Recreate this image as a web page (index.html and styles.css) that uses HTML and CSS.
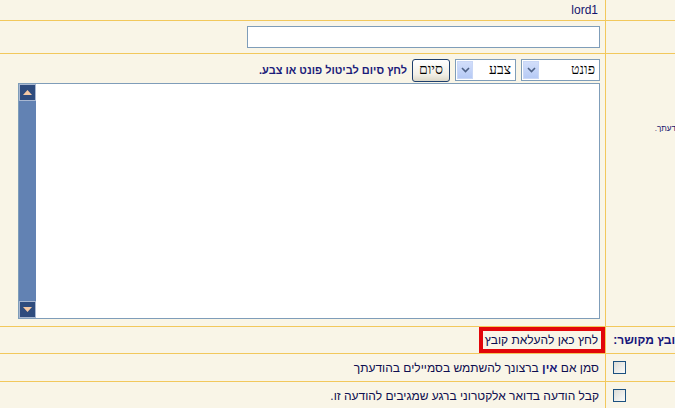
FILE: index.html
```html
<!DOCTYPE html>
<html>
<head>
<meta charset="UTF-8">
<title>תגובה חדשה</title>
<link rel="stylesheet" href="styles.css">
</head>
<body>
<div class="form">

  <div class="cell main user" dir="rtl">lord1</div>
  <div class="cell side"></div>

  <div class="cell main subject" dir="rtl"><input type="text" class="field"></div>
  <div class="cell side"></div>

  <div class="cell main message" dir="rtl">
    <div class="toolbar">
      <div class="pick font-pick">
        <span class="pick-label">פונט</span>
        <span class="pick-btn"><svg width="9" height="6" viewBox="0 0 9 6"><polyline points="1,1 4.5,4.5 8,1" fill="none" stroke="#4d6185" stroke-width="1.6"/></svg></span>
      </div>
      <div class="pick color-pick">
        <span class="pick-label">צבע</span>
        <span class="pick-btn"><svg width="9" height="6" viewBox="0 0 9 6"><polyline points="1,1 4.5,4.5 8,1" fill="none" stroke="#4d6185" stroke-width="1.6"/></svg></span>
      </div>
      <button class="done">סיום</button>
      <span class="hint">לחץ סיום לביטול פונט או צבע.</span>
    </div>
    <div class="editor">
      <textarea class="body"></textarea>
      <div class="scroll">
        <span class="sbtn"><svg width="9" height="5" viewBox="0 0 9 5"><polygon points="0,5 4.5,0 9,5" fill="#f6c9a4"/></svg></span>
        <span class="track"></span>
        <span class="sbtn"><svg width="9" height="5" viewBox="0 0 9 5"><polygon points="0,0 4.5,5 9,0" fill="#f6c9a4"/></svg></span>
      </div>
    </div>
  </div>
  <div class="cell side label small-label" dir="rtl">הודעתך.</div>

  <div class="cell main attach" dir="rtl"><span class="upload">לחץ כאן להעלאת קובץ</span></div>
  <div class="cell side label" dir="rtl"><b>קובץ מקושר:</b></div>

  <div class="cell main option" dir="rtl"><span>סמן אם <b>אין</b> ברצונך להשתמש בסמיילים בהודעתך</span></div>
  <div class="cell side check"><span class="box"></span></div>

  <div class="cell main option" dir="rtl"><span>קבל הודעה בדואר אלקטרוני ברגע שמגיבים להודעה זו.</span></div>
  <div class="cell side check"><span class="box"></span></div>

</div>
</body>
</html>
```

FILE: styles.css
```css
:root {
  --bg: #f9f5e7;
  --line: #f2c85c;
  --navy: #14146e;
  --xp-border: #7f9db9;
}

html, body {
  margin: 0;
  padding: 0;
  height: 100%;
  overflow: hidden;
  background: var(--bg);
}

.form {
  display: grid;
  grid-template-columns: 606px 80px;
  grid-template-rows: 21px 33px 273px 27px 28px 28px;
  width: 686px;
  font-family: "Liberation Sans", "DejaVu Sans", sans-serif;
  font-size: 12px;
  color: var(--navy);
}

.cell {
  box-sizing: border-box;
  border-bottom: 1px solid var(--line);
  display: flex;
  align-items: center;
}
.main {
  border-right: 1px solid var(--line);
  padding-right: 5px;
}

/* row: user name */
.user {
  padding-right: 7px;
  font-size: 12px;
}

/* row: subject */
.field {
  box-sizing: border-box;
  width: 353px;
  height: 22px;
  margin: 0;
  border: 1px solid var(--xp-border);
  background: #fff;
  outline: none;
}

/* row: message */
.message {
  flex-direction: column;
  align-items: flex-start;
  padding-top: 5px;
}
.toolbar {
  display: flex;
  align-items: center;
  height: 22px;
  gap: 5px;
}
.pick {
  box-sizing: border-box;
  display: flex;
  justify-content: space-between;
  align-items: center;
  height: 22px;
  border: 1px solid var(--xp-border);
  background: #fff;
  padding: 1px;
}
.font-pick { width: 79px; }
.color-pick { width: 61px; }
.pick-label {
  padding-right: 3px;
  font-family: "Liberation Serif", "DejaVu Serif", serif;
  font-size: 14px;
  color: #000;
}
.pick-btn {
  width: 16px;
  height: 18px;
  display: flex;
  align-items: center;
  justify-content: center;
  background: linear-gradient(#d2defa, #b6caf5);
  border: 1px solid #c9d7f6;
  box-sizing: border-box;
}
.done {
  box-sizing: border-box;
  height: 23px;
  width: 38px;
  padding: 0;
  border: 1px solid #1e3f6e;
  border-radius: 3px;
  background: linear-gradient(#ffffff, #f1efe6 70%, #dcd8c8);
  font-family: "Liberation Serif", "DejaVu Serif", serif;
  font-size: 14px;
  color: #000;
}
.hint {
  font-weight: bold;
  font-size: 11px;
  color: #1c1c7a;
}

.editor {
  display: flex;
  width: 582px;
  height: 236px;
  margin-top: 2px;
  box-sizing: border-box;
  border: 1px solid var(--xp-border);
  background: #fff;
}
.body {
  flex: 1;
  border: none;
  margin: 0;
  padding: 2px;
  resize: none;
  outline: none;
  background: #fff;
}
.scroll {
  width: 17px;
  display: flex;
  flex-direction: column;
  background: #6282b3;
}
.sbtn {
  box-sizing: border-box;
  height: 17px;
  display: flex;
  align-items: center;
  justify-content: center;
  background: #2f4c7e;
  border: 1px solid #a9b8d2;
}
.track { flex: 1; }

/* side labels */
.label {
  justify-content: flex-start;
  padding-right: 3px;
  white-space: nowrap;
}
.label b {
  font-size: 12px;
  color: #16167a;
}
.small-label {
  align-items: flex-start;
  padding-top: 70px;
  font-size: 8px;
}

/* row: attachment */
.attach { padding-right: 0; }
.upload {
  box-sizing: border-box;
  height: 26px;
  width: 126px;
  border: 4px solid #e2060a;
  display: flex;
  align-items: center;
  padding-right: 3px;
  white-space: nowrap;
  color: #0c0c50;
}

/* rows: options */
.option {
  padding-right: 6px;
  white-space: nowrap;
  color: #0e0e50;
}
.option b { color: #1a1a7a; }
.check {
  justify-content: flex-start;
  padding-left: 7px;
}
.box {
  box-sizing: border-box;
  width: 13px;
  height: 13px;
  border: 1px solid #1c5180;
  background: linear-gradient(135deg, #dcdcd7, #fbfbf9);
}
```
